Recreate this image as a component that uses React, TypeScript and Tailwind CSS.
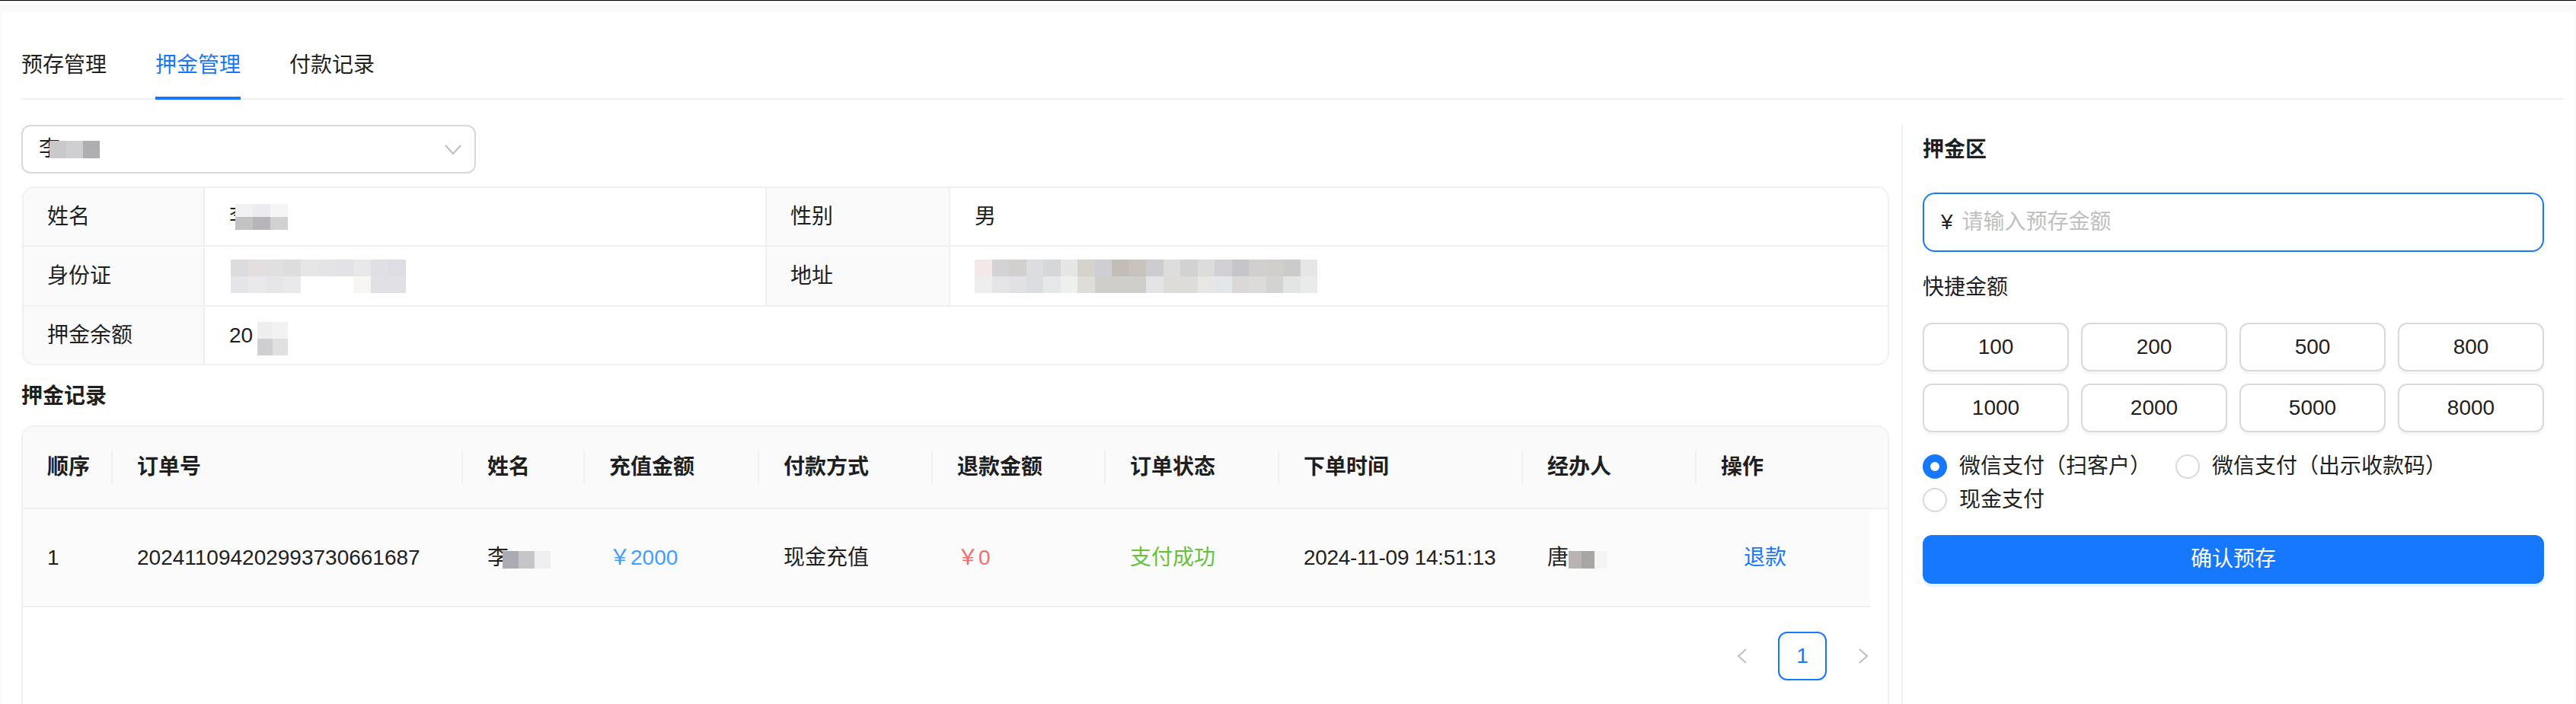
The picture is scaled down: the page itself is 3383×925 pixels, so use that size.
import React from "react";

const tabs = ["预存管理", "押金管理", "付款记录"];

const columns = [
  { title: "顺序", w: "w-[118px]" },
  { title: "订单号", w: "w-[460px]" },
  { title: "姓名", w: "w-[160px]" },
  { title: "充值金额", w: "w-[229px]" },
  { title: "付款方式", w: "w-[228px]" },
  { title: "退款金额", w: "w-[227px]" },
  { title: "订单状态", w: "w-[228px]" },
  { title: "下单时间", w: "w-[320px]" },
  { title: "经办人", w: "w-[228px]" },
  { title: "操作", w: "w-[228px]" },
];

const quickAmounts = ["100", "200", "500", "800", "1000", "2000", "5000", "8000"];

const payMethods = [
  { label: "微信支付（扫客户）", checked: true },
  { label: "微信支付（出示收款码）", checked: false },
  { label: "现金支付", checked: false },
];

// privacy mosaics, rows of tile colours
const selectBlur = [
  ["bg-[#c9c8cb]", "bg-[#cfcfd1]", "bg-[#b0aeb0]"],
];
const nameBlur = [
  ["bg-[#f1f1f3]", "bg-[#ecebef]", "bg-[#f5f5f7]"],
  ["bg-[#c3c3c4]", "bg-[#b7b5b9]", "bg-[#d2d1cf]"],
];
const idBlur = [
  ["bg-[#dcdcde]", "bg-[#e4dfdf]", "bg-[#e0e0e2]", "bg-[#dddddd]", "bg-[#e6e6e6]", "bg-[#e4e4e6]", "bg-[#e3e2e6]", "bg-[#e8e8ea]", "bg-[#e0dfe4]", "bg-[#dedde3]"],
  ["bg-[#e4e5e8]", "bg-[#e9e9ec]", "bg-[#e6e6e8]", "bg-[#e9e9eb]", "bg-white", "bg-white", "bg-white", "bg-[#f7f6f5]", "bg-[#e1e0e4]", "bg-[#e1e0e4]"],
];
const addrBlur = [
  ["bg-[#f2e9e8]", "bg-[#d3d3d5]", "bg-[#d2d0cf]", "bg-[#dcdde0]", "bg-[#d6d7d9]", "bg-[#e6e7e5]", "bg-[#d5d3cc]", "bg-[#cfced2]", "bg-[#c3bdb8]", "bg-[#c9c3bd]", "bg-[#cdccd1]", "bg-[#dedddb]", "bg-[#d2d2d2]", "bg-[#dcdcda]", "bg-[#d1d1d5]", "bg-[#c6c5c9]", "bg-[#d2d0cf]", "bg-[#d1cfcc]", "bg-[#cbcbc9]", "bg-[#e6e6e6]"],
  ["bg-[#eeeeee]", "bg-[#e5e5e7]", "bg-[#e1e1e3]", "bg-[#dcdde0]", "bg-[#e5e8e8]", "bg-[#eef0eb]", "bg-[#dfddd8]", "bg-[#cfcecb]", "bg-[#cfceca]", "bg-[#cfceca]", "bg-[#e4e4e6]", "bg-[#dddcd8]", "bg-[#dddcd8]", "bg-[#e8e7e5]", "bg-[#e4e7e9]", "bg-[#dcd8d5]", "bg-[#dddbd9]", "bg-[#d3d3d1]", "bg-[#e3e4e4]", "bg-[#e9eaec]"],
];
const balanceBlur = [
  ["bg-[#eeeef0]", "bg-[#f2f2f3]"],
  ["bg-[#cfcfd1]", "bg-[#e0e0e0]"],
];
const rowNameBlur = [
  ["bg-[#acabb1]", "bg-[#c6c5c8]", "bg-[#efeff1]"],
];
const operatorBlur = [
  ["bg-[#b9b4b4]", "bg-[#a9a5a5]", "bg-[#f4f4f4]"],
];

function Mosaic({ rows, cell, className = "" }: { rows: string[][]; cell: string; className?: string }) {
  return (
    <span className={`inline-flex flex-col ${className}`}>
      {rows.map((r, i) => (
        <span key={i} className="flex">
          {r.map((c, j) => (
            <span key={j} className={`${cell} ${c}`} />
          ))}
        </span>
      ))}
    </span>
  );
}

function DescLabel({ children, w }: { children: React.ReactNode; w: string }) {
  return (
    <div className={`${w} shrink-0 h-full flex items-center pl-[31px] bg-[#fafafa] border-r-2 border-[#f0f0f0]`}>
      {children}
    </div>
  );
}

export default function App() {
  return (
    <div className="w-[3383px] h-[925px] flex flex-col bg-[#fafafa] border-t border-black font-['Liberation_Sans','Noto_Sans_CJK_SC',sans-serif] text-[28px] leading-[44px] text-[#1f1f1f] whitespace-nowrap overflow-hidden">
      <div className="mt-[15px] mx-[3px] flex-1 min-h-0 bg-white flex flex-col">
        {/* Tabs */}
        <div className="mt-[27px] ml-[24px] mr-[14px] pl-[1px] flex gap-[64px] border-b-2 border-[#f0f0f0]">
          {tabs.map((t, i) => (
            <div key={t} className={`relative py-[21px] ${i === 1 ? "text-[#1677ff]" : ""}`}>
              {t}
              {i === 1 && <span className="absolute left-0 right-0 bottom-[-2px] h-[4px] bg-[#1677ff]" />}
            </div>
          ))}
        </div>

        <div className="mt-[33px] flex-1 min-h-0 flex">
          {/* Left column */}
          <div className="ml-[25px] w-[2453px] shrink-0 flex flex-col">
            <div className="w-[597px] h-[64px] border-2 border-[#d9d9d9] rounded-[12px] flex items-center justify-between pl-[21px] pr-[17px]">
              <span className="flex items-center">
                <span>李</span>
                <Mosaic rows={selectBlur} cell="w-[22px] h-[23px]" className="-ml-[14px]" />
              </span>
              <svg width="22" height="13" viewBox="0 0 22 13" fill="none">
                <polyline points="1,1 11,12 21,1" stroke="#bfbfbf" strokeWidth="2" />
              </svg>
            </div>

            {/* Descriptions */}
            <div className="mt-[17px] ml-[1px] border-2 border-[#f0f0f0] rounded-[16px] overflow-hidden">
              <div className="flex h-[77px] border-b-2 border-[#f0f0f0] items-center">
                <DescLabel w="w-[238px]">姓名</DescLabel>
                <div className="w-[738px] shrink-0 h-full flex items-center pl-[32px] border-r-2 border-[#f0f0f0]">
                  <span>李</span>
                  <Mosaic rows={nameBlur} cell="w-[23px] h-[17px]" className="-ml-[20px]" />
                </div>
                <DescLabel w="w-[241px]">性别</DescLabel>
                <div className="flex-1 h-full flex items-center pl-[32px]">男</div>
              </div>
              <div className="flex h-[79px] border-b-2 border-[#f0f0f0] items-center">
                <DescLabel w="w-[238px]">身份证</DescLabel>
                <div className="w-[738px] shrink-0 h-full flex items-center pl-[34px] border-r-2 border-[#f0f0f0]">
                  <Mosaic rows={idBlur} cell="w-[23px] h-[22px]" />
                </div>
                <DescLabel w="w-[241px]">地址</DescLabel>
                <div className="flex-1 h-full flex items-center pl-[32px]">
                  <Mosaic rows={addrBlur} cell="w-[22.5px] h-[22px]" />
                </div>
              </div>
              <div className="flex h-[75px] items-center">
                <DescLabel w="w-[238px]">押金余额</DescLabel>
                <div className="flex-1 h-full flex items-center pl-[32px]">
                  <span>20</span>
                  <Mosaic rows={balanceBlur} cell="w-[20px] h-[22px]" className="ml-[6px] mt-[8px]" />
                </div>
              </div>
            </div>

            <div className="mt-[19px] font-semibold">押金记录</div>

            {/* Records table */}
            <div className="mt-[16px] flex-1 min-h-0 border-2 border-b-0 border-[#f0f0f0] rounded-t-[16px] overflow-hidden">
              <div className="flex h-[108px] bg-[#fafafa] border-b-2 border-[#f0f0f0]">
                {columns.map((c, i) => (
                  <div key={c.title} className={`${c.w} shrink-0 relative flex items-center px-[32px] font-semibold`}>
                    {c.title}
                    {i < columns.length - 1 && (
                      <span className="absolute right-0 top-1/2 -translate-y-1/2 w-[2px] h-[44px] bg-[#f0f0f0]" />
                    )}
                  </div>
                ))}
                <div className="flex-1" />
              </div>

              <div className="flex w-[2426px] h-[129px] bg-[#fbfbfb] border-b-2 border-[#f0f0f0]">
                <div className={`${columns[0].w} shrink-0 flex items-center px-[32px]`}>1</div>
                <div className={`${columns[1].w} shrink-0 flex items-center px-[32px]`}>202411094202993730661687</div>
                <div className={`${columns[2].w} shrink-0 flex items-center px-[32px]`}>
                  <span>李</span>
                  <Mosaic rows={rowNameBlur} cell="w-[21px] h-[23px]" className="-ml-[8px] mt-[6px]" />
                </div>
                <div className={`${columns[3].w} shrink-0 flex items-center px-[32px] text-[#409eff]`}>￥2000</div>
                <div className={`${columns[4].w} shrink-0 flex items-center px-[32px]`}>现金充值</div>
                <div className={`${columns[5].w} shrink-0 flex items-center px-[32px] text-[#f56c6c]`}>￥0</div>
                <div className={`${columns[6].w} shrink-0 flex items-center px-[32px] text-[#67c23a]`}>支付成功</div>
                <div className={`${columns[7].w} shrink-0 flex items-center px-[32px] tracking-[-0.3px]`}>2024-11-09 14:51:13</div>
                <div className={`${columns[8].w} shrink-0 flex items-center px-[32px]`}>
                  <span>唐</span>
                  <Mosaic rows={operatorBlur} cell="w-[17px] h-[23px]" className="mt-[6px]" />
                </div>
                <div className={`${columns[9].w} shrink-0 flex items-center px-[32px]`}>
                  <span className="pl-[30px] text-[#1677ff]">退款</span>
                </div>
              </div>

              <div className="mt-[32px] flex justify-end gap-[16px]">
                <div className="w-[64px] h-[64px] flex items-center justify-center">
                  <svg width="13" height="20" viewBox="0 0 13 20" fill="none">
                    <polyline points="12,1 2,10 12,19" stroke="#bfbfbf" strokeWidth="2" />
                  </svg>
                </div>
                <div className="w-[64px] h-[64px] flex items-center justify-center border-2 border-[#1677ff] rounded-[12px] text-[#1677ff]">
                  1
                </div>
                <div className="w-[64px] h-[64px] flex items-center justify-center">
                  <svg width="13" height="20" viewBox="0 0 13 20" fill="none">
                    <polyline points="1,1 11,10 1,19" stroke="#bfbfbf" strokeWidth="2" />
                  </svg>
                </div>
              </div>
            </div>
          </div>

          {/* Right panel */}
          <div className="ml-[16px] w-[883px] shrink-0 border-l-2 border-[#f0f0f0] pl-[26px] pr-[39px]">
            <div className="mt-[11px] font-semibold">押金区</div>
            <div className="mt-[34px] h-[78px] border-2 border-[#1677ff] rounded-[16px] flex items-center pl-[22px]">
              <span className="mr-[12px]">¥</span>
              <span className="text-[#bfbfbf]">请输入预存金额</span>
            </div>
            <div className="mt-[25px]">快捷金额</div>
            <div className="mt-[24px] grid grid-cols-4 gap-[16px]">
              {quickAmounts.map((a) => (
                <div
                  key={a}
                  className="h-[64px] border-2 border-[#d9d9d9] rounded-[12px] flex items-center justify-center shadow-[0_4px_0_rgba(0,0,0,0.03)]"
                >
                  {a}
                </div>
              ))}
            </div>
            <div className="mt-[23px] flex flex-wrap">
              {payMethods.map((m) => (
                <label key={m.label} className="flex items-center mr-[16px]">
                  {m.checked ? (
                    <span className="w-[32px] h-[32px] rounded-full bg-[#1677ff] flex items-center justify-center">
                      <span className="w-[12px] h-[12px] rounded-full bg-white" />
                    </span>
                  ) : (
                    <span className="w-[32px] h-[32px] rounded-full border-2 border-[#d9d9d9] bg-white" />
                  )}
                  <span className="px-[16px]">{m.label}</span>
                </label>
              ))}
            </div>
            <button className="mt-[24px] w-full h-[64px] rounded-[12px] bg-[#1677ff] text-white flex items-center justify-center shadow-[0_4px_0_rgba(5,145,255,0.1)]">
              确认预存
            </button>
          </div>
        </div>
      </div>
    </div>
  );
}
